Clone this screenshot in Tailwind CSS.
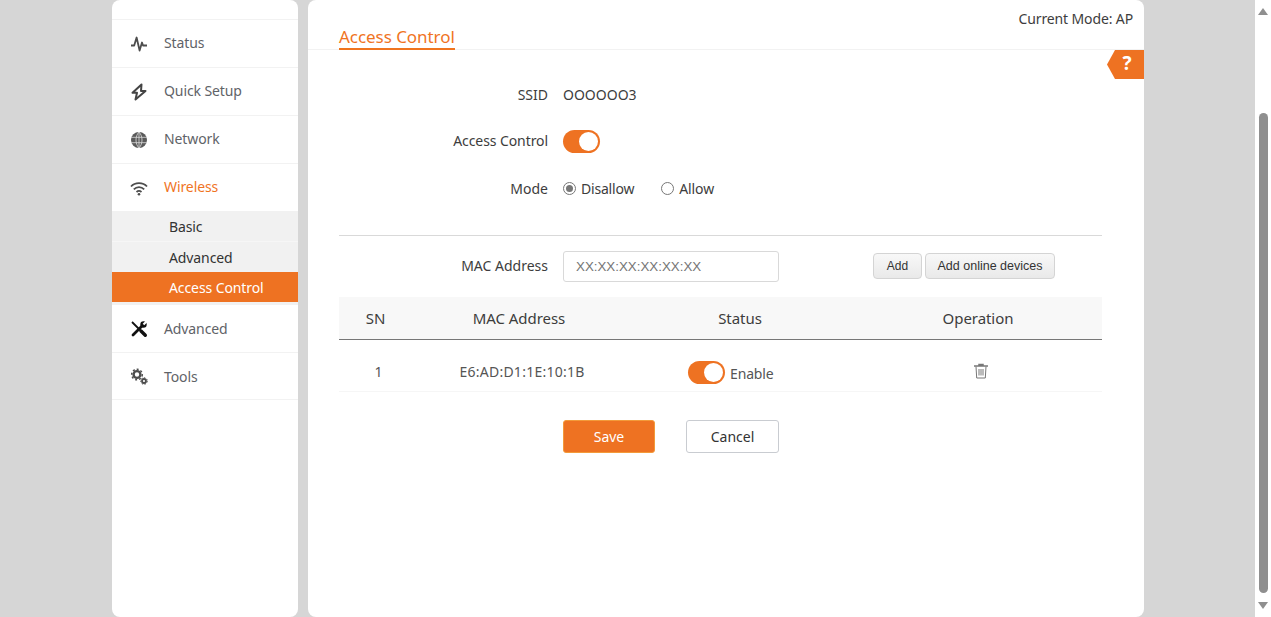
<!doctype html>
<html>
<head>
  <meta charset="UTF-8">
  <title>Access Control</title>
  <script src="https://cdn.jsdelivr.net/npm/@tailwindcss/browser@4"></script>
</head>
<body class="h-[617px] overflow-hidden bg-[#d6d6d6] font-['Noto_Sans',sans-serif] text-[14px] text-[#3d3d3d]">
  <div class="flex h-[617px]">
    <div class="flex w-[1255px] pl-[112px] gap-[10px]">

      <!-- Sidebar -->
      <nav class="w-[186px] h-[617px] bg-white rounded-[8px] pt-[19px] text-[#5f6368] tracking-[-0.1px]">
        <a class="flex items-center h-[48px] border-t border-[#f2f2f2]">
          <svg class="ml-[18px] w-[18px] h-[18px]" viewBox="0 0 18 18" fill="none" stroke="#4d4d4d" stroke-width="1.800" stroke-linejoin="round"><path d="M1 10.500h3.200L6.600 2.500l3 13 2.400-8 1 3H17"/></svg>
          <span class="ml-[16px] pb-[2px]">Status</span>
        </a>
        <a class="flex items-center h-[48px] border-t border-[#f2f2f2]">
          <svg class="ml-[18px] w-[18px] h-[18px]" viewBox="0 0 18 18" fill="none" stroke="#444" stroke-width="2" stroke-linejoin="round"><path d="M11.500 1.500 2.500 9.800H7l-1.500 6.700 10-8.500H11z"/></svg>
          <span class="ml-[16px] pb-[2px]">Quick Setup</span>
        </a>
        <a class="flex items-center h-[48px] border-t border-[#f2f2f2]">
          <svg class="ml-[18px] w-[18px] h-[18px]" viewBox="0 0 18 18" fill="#5a5a5a" stroke="#ddd" stroke-width=".8"><circle cx="9" cy="9" r="8" stroke="none"/><path fill="none" d="M1 6.300h16M1 11.700h16M9 1v16M9 1C5 5 5 13 9 17M9 1c4 4 4 12 0 16"/></svg>
          <span class="ml-[16px] pb-[2px]">Network</span>
        </a>
        <a class="flex items-center h-[48px] border-t border-[#f2f2f2] text-[#f0741f]">
          <svg class="ml-[18px] w-[18px] h-[18px]" viewBox="0 0 18 18" fill="none" stroke="#4d4d4d" stroke-width="1.800"><path d="M1 7.500C5 3 13 3 17 7.500M3.800 10.300c3-3 7.400-3 10.400 0M6.500 13c1.500-1.300 3.500-1.300 5 0"/><circle cx="9" cy="15.300" r="1.300" fill="#4d4d4d" stroke="none"/></svg>
          <span class="ml-[16px] pb-[2px]">Wireless</span>
        </a>
        <div class="bg-[#f1f1f1] text-[#333] pb-[3px]">
          <a class="flex items-center h-[31px] pl-[57px] border-b border-[#f6f6f6]">Basic</a>
          <a class="flex items-center h-[30px] pl-[57px]">Advanced</a>
          <a class="flex items-center h-[30px] pl-[57px] bg-[#ee7222] text-white">Access Control</a>
        </div>
        <a class="flex items-center h-[47px]">
          <svg class="ml-[18px] w-[18px] h-[18px]" viewBox="0 0 18 18" fill="none" stroke="#111"><path stroke-width="1.800" d="M2 2l9 9"/><path stroke-width="3.400" stroke-linecap="round" d="M11 11l4.300 4.300"/><path stroke-width="2.800" stroke-linecap="round" d="M3 15 12 6"/><circle cx="13.500" cy="4.500" r="3.200" fill="#111" stroke="none"/><path stroke="#fff" stroke-width="2.200" d="M13.500 4.500 17.500.5"/></svg>
          <span class="ml-[16px] pb-[1px]">Advanced</span>
        </a>
        <a class="flex items-center h-[48px] border-t border-b border-[#f2f2f2]">
          <svg class="ml-[18px] w-[18px] h-[18px]" viewBox="0 0 18 18" fill="none" stroke="#4d4d4d"><circle cx="7" cy="7.500" r="3.400" stroke-width="2.400"/><circle cx="7" cy="7.500" r="5.300" stroke-width="1.500" stroke-dasharray="2 2"/><circle cx="14" cy="14" r="2" stroke-width="1.800"/><circle cx="14" cy="14" r="3.300" stroke-width="1" stroke-dasharray="1.500 1.500"/></svg>
          <span class="ml-[16px]">Tools</span>
        </a>
      </nav>

      <!-- Main panel -->
      <main class="relative w-[836px] h-[617px] bg-white rounded-[8px]">
        <div class="h-[50px] pl-[31px] pr-[11px] border-b border-[#f2f2f2] flex justify-between">
          <h1 class="mt-[25px] h-[25px] text-[17px] leading-[23px] tracking-[-0.05px] text-[#f0741f] border-b-2 border-[#f0741f]">Access Control</h1>
          <span class="mt-[9px] h-[20px] leading-[20px] tracking-[-0.13px]">Current Mode: AP</span>
        </div>
        <div class="absolute right-0 top-[50px] w-[37px] h-[29px] bg-[#ee7222] text-white font-bold text-[19px] leading-[27px] text-center pl-[3px] [clip-path:polygon(8px_0,100%_0,100%_100%,8px_100%,0_50%)]">?</div>

        <div class="pl-[31px] pr-[42px]">
          <div class="flex items-center h-[24px] mt-[32px]">
            <label class="w-[209px] text-right">SSID</label>
            <span class="ml-[15px]">OOOOOO3</span>
          </div>
          <div class="flex items-center h-[24px] mt-[23px]">
            <label class="w-[209px] text-right pb-[2px] tracking-[-0.08px]">Access Control</label>
            <span class="ml-[15px] w-[37px] h-[23px] rounded-full bg-[#ee7222] flex items-center justify-end pr-[2px]"><i class="block w-[19px] h-[19px] rounded-full bg-white"></i></span>
          </div>
          <div class="flex items-center h-[24px] mt-[23px]">
            <label class="w-[209px] text-right">Mode</label>
            <span class="ml-[15px] w-[13px] h-[13px] rounded-full border border-[#777] flex items-center justify-center"><i class="block w-[7px] h-[7px] rounded-full bg-[#777]"></i></span>
            <span class="ml-[5px] tracking-[-0.2px]">Disallow</span>
            <span class="ml-[27px] w-[13px] h-[13px] rounded-full border border-[#777]"></span>
            <span class="ml-[5px] tracking-[-0.1px]">Allow</span>
          </div>

          <div class="mt-[35px] border-t border-[#d9d9d9]"></div>

          <div class="flex items-center mt-[15px] h-[31px]">
            <label class="w-[209px] text-right pb-[2px]">MAC Address</label>
            <input class="ml-[15px] w-[216px] h-[31px] border border-[#d9d9d9] rounded-[3px] px-[12px] outline-none font-['Liberation_Sans',sans-serif] text-[13.33px] placeholder:text-[#757575]" placeholder="XX:XX:XX:XX:XX:XX">
            <button class="self-start mt-[2px] ml-[94px] w-[49px] h-[26px] border border-[#d4d4d4] rounded-[4px] bg-gradient-to-b from-[#f8f8f8] to-[#e9e9e9] font-['Liberation_Sans',sans-serif] text-[12px] text-[#333]">Add</button>
            <button class="self-start mt-[2px] ml-[3px] w-[130px] h-[26px] border border-[#d4d4d4] rounded-[4px] bg-gradient-to-b from-[#f8f8f8] to-[#e9e9e9] font-['Liberation_Sans',sans-serif] text-[12.5px] text-[#333]">Add online devices</button>
          </div>

          <div class="grid grid-cols-[73px_214px_228px_248px] items-center h-[43px] mt-[15px] bg-[#f8f8f8] border-b border-[#777] text-center text-[15px] tracking-[-0.05px]">
            <span>SN</span><span>MAC Address</span><span>Status</span><span>Operation</span>
          </div>
          <div class="grid grid-cols-[73px_214px_228px_248px] items-center h-[52px] pt-[12px] border-b border-[#f6f6f6] text-center text-[#555]">
            <span class="pl-[6px]">1</span>
            <span class="pl-[6px] tracking-[0.25px]">E6:AD:D1:1E:10:1B</span>
            <span class="flex items-center pl-[62px]">
              <span class="mt-[1px] w-[37px] h-[23px] rounded-full bg-[#ee7222] flex items-center justify-end pr-[2px]"><i class="block w-[19px] h-[19px] rounded-full bg-white"></i></span>
              <span class="ml-[5px] mt-[3px] tracking-[-0.15px]">Enable</span>
            </span>
            <span class="flex justify-center pl-[6px] pb-[2px]">
              <svg class="w-[16px] h-[16px]" viewBox="0 0 16 16" fill="none" stroke="#777"><path stroke-width="1.500" d="M1 3h14M6 3V1.500h4V3"/><path d="M3 3.500 3.700 15h8.600L13 3.500M6 6v6.500M8 6v6.500M10 6v6.500"/></svg>
            </span>
          </div>

          <div class="flex mt-[28px] pl-[224px]">
            <button class="w-[92px] h-[33px] rounded-[3px] border border-[#f39a3a] bg-[#ee7222] text-white">Save</button>
            <button class="ml-[31px] w-[93px] h-[33px] rounded-[3px] border border-[#c9ccd1] bg-white text-[#333]">Cancel</button>
          </div>
        </div>
      </main>
    </div>

    <!-- Scrollbar -->
    <div class="w-[16px] h-[617px] bg-white flex flex-col items-center">
      <span class="mt-[8px] w-0 h-0 border-x-[5px] border-x-transparent border-b-[7px] border-b-[#8f8f8f]"></span>
      <span class="mt-[98px] w-[9px] h-[480px] rounded-full bg-[#8f8f8f]"></span>
      <span class="mt-[9px] w-0 h-0 border-x-[5px] border-x-transparent border-t-[7px] border-t-[#8f8f8f]"></span>
    </div>
  </div>
</body>
</html>
